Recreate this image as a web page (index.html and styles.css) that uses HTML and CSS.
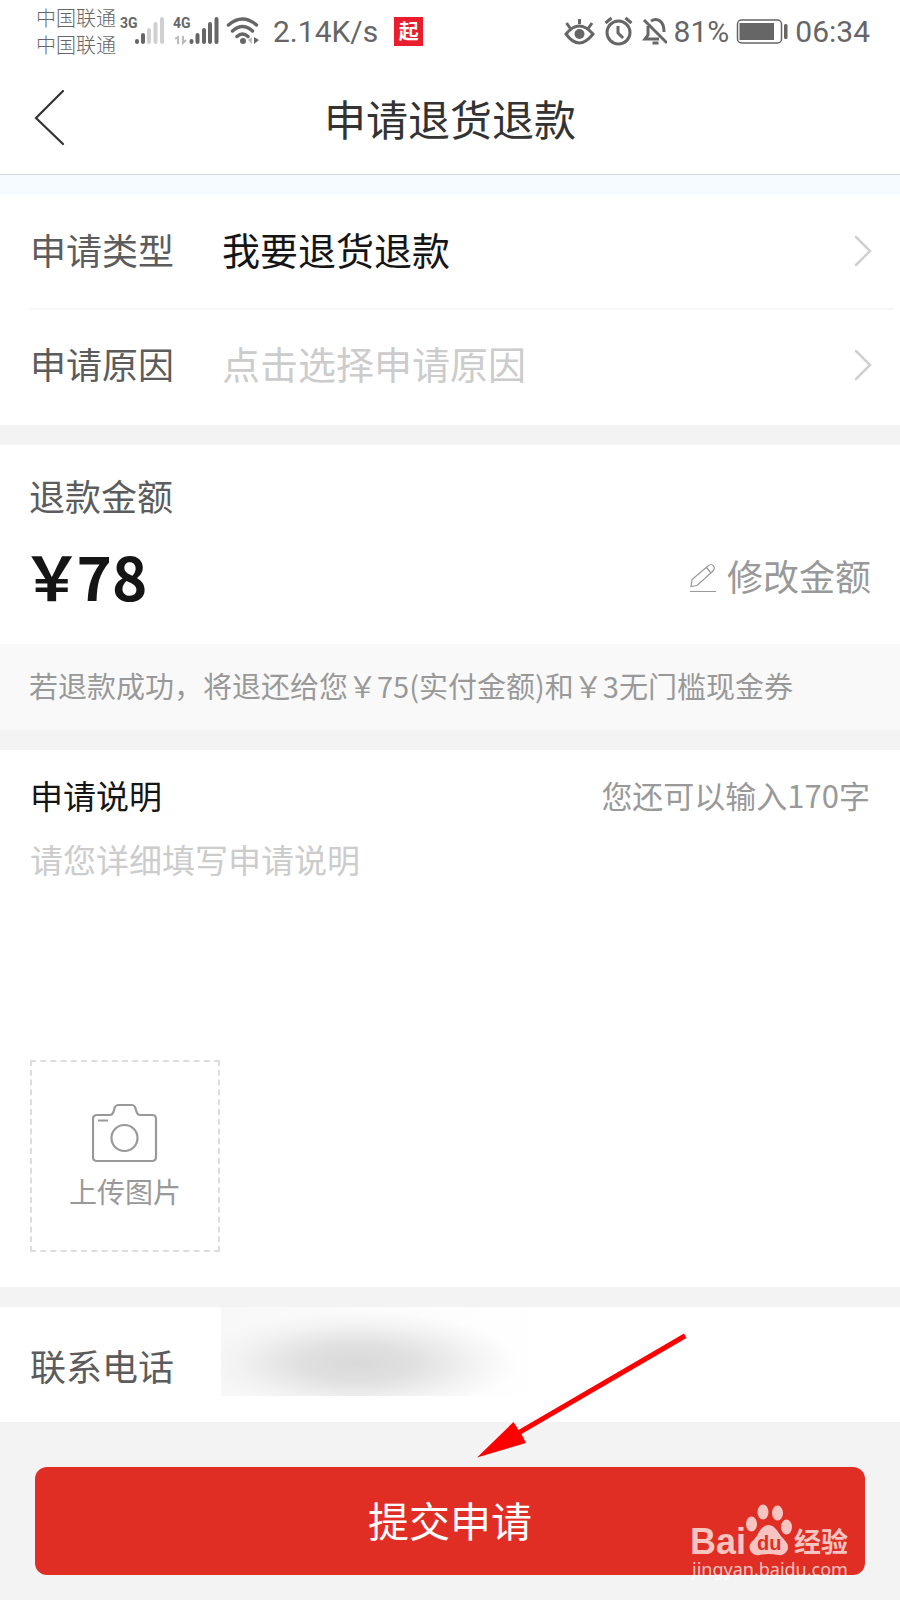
FILE: index.html
```html
<!DOCTYPE html>
<html lang="zh-CN">
<head>
<meta charset="utf-8">
<meta name="viewport" content="width=device-width, initial-scale=1">
<title>申请退货退款</title>
<link rel="stylesheet" href="styles.css">
</head>
<body>
<div class="status">
  <div class="status-side">
    <div class="carriers"><span>中国联通</span><span>中国联通</span></div>
    <svg class="signals" width="144" height="36" viewBox="118 12 144 36" aria-hidden="true">
      <g class="net-label"><text x="120" y="27">3G</text><text x="173" y="27">4G</text></g>
      <g stroke="#666" stroke-width="4" stroke-linecap="round">
        <path d="M137 40v1M143 34v7"/>
        <path stroke="#d0d0d0" d="M149 29v12M155.500 23v18M162 18v23"/>
        <path d="M191.500 40v1M197.500 34v7M204 29v12M210 23v18M216.500 18v23"/>
      </g>
      <g stroke="#bbb" stroke-width="2" fill="none"><path d="M175 38l3-2v7M183 35v7l3-3"/></g>
      <g fill="none" stroke="#666" stroke-width="3.500" stroke-linecap="round">
        <path d="M228.500 24q14-12 28 0M232.500 30q10-9 20 0M237 35.500q5.500-5 11 0"/>
      </g>
      <circle cx="243" cy="40" r="3" fill="#666"/>
      <path d="M252 36v7l-4-4z" fill="#bbb"/><path d="M254 36v7l5-4z" fill="#666"/>
    </svg>
    <span class="speed">2.14K/s</span>
    <span class="app-badge">起</span>
  </div>
  <div class="status-side status-right">
    <svg width="104" height="32" viewBox="562 14 104 32" fill="none" stroke="#666" stroke-width="3" aria-hidden="true">
      <path d="M565 33q13-16 27 0q-14 18-27 0zM578.500 18v5M565.500 22l3.500 5M591 22l-3.500 5"/>
      <circle cx="578.500" cy="33" r="5" fill="#666" stroke="none"/>
      <circle cx="617.500" cy="31.500" r="11.500"/>
      <path d="M617 25v7l5 5M604.500 22l6-5M630.500 22l-6-5"/>
      <path d="M643 19l23 23M647 25v9l-3 4h14M650 20q5-3 9 0q4 3 4 11M655 19.500v-2"/>
      <path d="M651.500 42h6"/>
    </svg>
    <span>81%</span>
    <svg class="battery" width="52" height="26" viewBox="736 17 52 26" aria-hidden="true">
      <rect x="737.500" y="19" width="44" height="23" rx="4" fill="none" stroke="#666" stroke-width="1.500"/>
      <rect x="739.500" y="22" width="34.500" height="17" fill="#666"/>
      <rect x="784" y="23" width="3.500" height="15" rx="1.500" fill="#666"/>
    </svg>
    <span>06:34</span>
  </div>
</div>

<header class="titlebar">
  <button class="back" type="button" aria-label="返回">
    <svg width="32" height="56" viewBox="0 0 32 56" fill="none" stroke="#333" stroke-width="2.200" stroke-linecap="round"><path d="M29 1L2 28L29 54"/></svg>
  </button>
  <h1>申请退货退款</h1>
</header>

<form class="page">
  <section class="card picks">
    <button class="pick" type="button">
      <span class="label">申请类型</span><span class="value">我要退货退款</span>
      <svg width="18" height="32" viewBox="0 0 18 32" fill="none" stroke="#d0d0d0" stroke-width="2.500" stroke-linecap="round" aria-hidden="true"><path d="M2 2l14 14L2 30"/></svg>
    </button>
    <button class="pick" type="button">
      <span class="label">申请原因</span><span class="value empty">点击选择申请原因</span>
      <svg width="18" height="32" viewBox="0 0 18 32" fill="none" stroke="#d0d0d0" stroke-width="2.500" stroke-linecap="round" aria-hidden="true"><path d="M2 2l14 14L2 30"/></svg>
    </button>
  </section>

  <section class="card">
    <div class="refund">
      <h2 class="label">退款金额</h2>
      <div class="amount-line">
        <strong class="amount"><span>￥</span><span>78</span></strong>
        <button class="edit" type="button">
          <svg width="28" height="34" viewBox="0 -4 28 34" fill="none" stroke="#999" stroke-width="1.200" aria-hidden="true"><path d="M1 29.500h26M2 24.500l1-7L19 4q3-3 5.500 0q2 2.500-1 5.500L8 23.500zM17.500 5.500l4.500 5.500"/></svg>
          修改金额
        </button>
      </div>
    </div>
    <p class="note">若退款成功，将退还给您￥75(实付金额)和￥3无门槛现金券</p>
  </section>

  <section class="card describe">
    <div class="describe-head">
      <label for="desc">申请说明</label>
      <span class="counter">您还可以输入170字</span>
    </div>
    <textarea id="desc" maxlength="170" placeholder="请您详细填写申请说明"></textarea>
    <button class="upload" type="button">
      <svg width="66" height="60" viewBox="0 0 66 60" fill="none" stroke="#999" stroke-width="2.200" aria-hidden="true">
        <path d="M5 12h13q2 0 3-2l2-6q1-2 3-2h14q2 0 3 2l2 6q1 2 3 2h12q4 0 4 4v38q0 4-4 4H5q-4 0-4-4V16q0-4 4-4zM6 17.500h10"/>
        <circle cx="32.500" cy="35" r="13"/>
      </svg>
      上传图片
    </button>
  </section>

  <section class="card phone">
    <label class="label" for="tel">联系电话</label>
    <input id="tel" class="tel" type="tel">
  </section>

  <footer class="actions">
    <button class="submit" type="submit">提交申请</button>
    <svg class="pointer" width="212" height="126" viewBox="475 1333 212 126" aria-hidden="true">
      <path d="M684 1333.500l2.500 4.500L521.500 1434l4.500 9L477 1457.500L513.500 1422l5 8z" fill="#f00"/>
    </svg>
    <svg class="watermark" width="168" height="84" viewBox="688 1500 168 84">
      <g fill="#fff" fill-opacity=".72">
        <text class="wm-logo" x="690" y="1554">Bai</text>
        <ellipse cx="751.500" cy="1524" rx="5.500" ry="7.500"/>
        <ellipse cx="763" cy="1512" rx="5.500" ry="7.500"/>
        <ellipse cx="777.500" cy="1513" rx="5.500" ry="7.500"/>
        <ellipse cx="786.500" cy="1527" rx="5.500" ry="7.500"/>
        <path d="M768.500 1525q5 0 9 6q3 5 7 9q5 5 3 10q-3 6-9 5q-10-2-19 0q-6 1-9-4q-3-6 3-11q4-4 6-9q4-6 9-6z"/>
        <text class="wm-cn" x="794" y="1552">经验</text>
        <text class="wm-url" x="692" y="1576">jingyan.baidu.com</text>
      </g>
      <text class="wm-du" x="757" y="1550">du</text>
    </svg>
  </footer>
</form>
</body>
</html>
```
FILE: styles.css
```css
* {
  box-sizing: border-box;
}

body {
  margin: 0;
  min-height: 100vh;
  display: flex;
  flex-direction: column;
  background: #f3f3f3;
  color: #151516;
  font-family: "Noto Sans CJK SC", sans-serif;
}

button,
input,
textarea {
  margin: 0;
  padding: 0;
  border: 0;
  background: none;
  font-family: inherit;
  color: inherit;
}

h1,
h2,
p {
  margin: 0;
  font-weight: 400;
}

svg {
  flex: none;
  display: block;
}

/* status bar */
.status {
  display: flex;
  justify-content: space-between;
  align-items: center;
  height: 62px;
  padding: 0 30px 0 36px;
  background: #fff;
  color: #666;
  font-family: Roboto, sans-serif;
  font-size: 30px;
}

.status-side {
  display: flex;
  align-items: center;
}

.carriers {
  display: flex;
  flex-direction: column;
  font: 300 20px/27px "Noto Sans CJK SC", sans-serif;
}

.signals {
  margin-left: 2px;
}

.net-label {
  font: 700 14px "Liberation Sans Narrow", Roboto, sans-serif;
  fill: #666;
}

.speed {
  margin-left: 11px;
}

.app-badge {
  margin-left: 16px;
  width: 29px;
  height: 29px;
  background: #e91d2d;
  color: #fff;
  font: 700 20px/27px "Noto Sans CJK SC", sans-serif;
  text-align: center;
}

.status-right {
  gap: 7px;
}

/* title bar */
.titlebar {
  display: flex;
  align-items: center;
  height: 113px;
  padding: 0 34px;
  border-bottom: 1px solid #d0d5d5;
  background: #fff;
}

.titlebar h1 {
  flex: 1;
  padding-right: 32px;
  text-align: center;
  font-size: 42px;
  line-height: 60px;
  color: #333;
}

/* sections */
.page {
  flex: 1;
  display: flex;
  flex-direction: column;
  gap: 20px;
  padding-top: 20px;
  background: linear-gradient(#f6fbff 20px, #f3f3f3 20px);
}

.card {
  background: #fff;
}

.label {
  font-size: 36px;
  line-height: 52px;
  color: #5c5c5c;
}

.picks {
  padding: 0 6px 3px 30px;
}

.pick {
  display: flex;
  align-items: center;
  width: 100%;
  height: 113px;
  padding-right: 22px;
  padding-bottom: 2px;
  text-align: left;
}

.pick + .pick {
  border-top: 2px solid #f6f6f6;
  height: 114px;
}

.pick .label,
.value {
  padding-bottom: 4px;
}

.pick .label {
  width: 192px;
}

.value {
  flex: 1;
  font-size: 38px;
  line-height: 52px;
}

.empty {
  color: #ccc;
}

/* refund */
.refund {
  padding: 24px 29px 25px;
}

.amount-line {
  display: flex;
  justify-content: space-between;
  align-items: center;
  margin-top: 10px;
}

.amount {
  display: flex;
  gap: 2px;
  font-size: 60px;
  line-height: 88px;
  font-weight: 700;
  font-feature-settings: "palt";
}

.edit {
  display: flex;
  align-items: center;
  gap: 10px;
  font-size: 36px;
  line-height: 52px;
  color: #999;
}

.note {
  padding: 20px 29px 24px;
  background: #f9f9f9;
  color: #999;
  font-size: 29px;
  line-height: 42px;
}

/* description */
.describe {
  padding: 20px 30px 35px;
}

.describe-head {
  display: flex;
  justify-content: space-between;
  align-items: center;
  font-size: 33px;
  line-height: 50px;
}

.counter {
  font-size: 31px;
  color: #999;
}

textarea {
  display: block;
  width: 100%;
  height: 176px;
  margin: 14px 0 50px;
  font-size: 33px;
  line-height: 50px;
  resize: none;
  outline: none;
}

textarea::placeholder {
  color: #ccc;
}

.upload {
  display: flex;
  flex-direction: column;
  align-items: center;
  justify-content: center;
  gap: 8px;
  width: 190px;
  height: 192px;
  padding-top: 2px;
  border: 2px dashed #ddd;
  font-size: 28px;
  line-height: 40px;
  color: #999;
}

/* phone */
.phone {
  display: flex;
  align-items: center;
  height: 115px;
  padding: 0 30px;
}

.phone .label {
  width: 191px;
}

.tel {
  align-self: flex-start;
  width: 332px;
  height: 89px;
  background:
    radial-gradient(ellipse 160px 52px at 136px 56px, #d9d9d9, #e0e0e0 35%, rgba(240, 240, 240, .7) 75%, rgba(255, 255, 255, 0)),
    linear-gradient(90deg, #f8f8f8, #fff);
}

/* submit */
.actions {
  position: relative;
  margin-top: -20px;
  padding: 45px 35px 25px;
}

.submit {
  display: block;
  width: 100%;
  height: 108px;
  padding-bottom: 5px;
  border-radius: 12px;
  background: #e02e24;
  color: #fff;
  font-size: 41px;
}

.pointer {
  position: absolute;
  top: -89px;
  left: calc(50% + 25px);
}

.watermark {
  position: absolute;
  right: 44px;
  bottom: 16px;
}

.wm-logo {
  font: 700 36px "Liberation Sans", sans-serif;
}

.wm-cn {
  font: 700 27px "Noto Sans CJK SC", sans-serif;
}

.wm-url {
  font: 400 18px "Noto Sans", sans-serif;
}

.wm-du {
  font: 700 20px "Liberation Sans", sans-serif;
  fill: #e02e24;
}
```
